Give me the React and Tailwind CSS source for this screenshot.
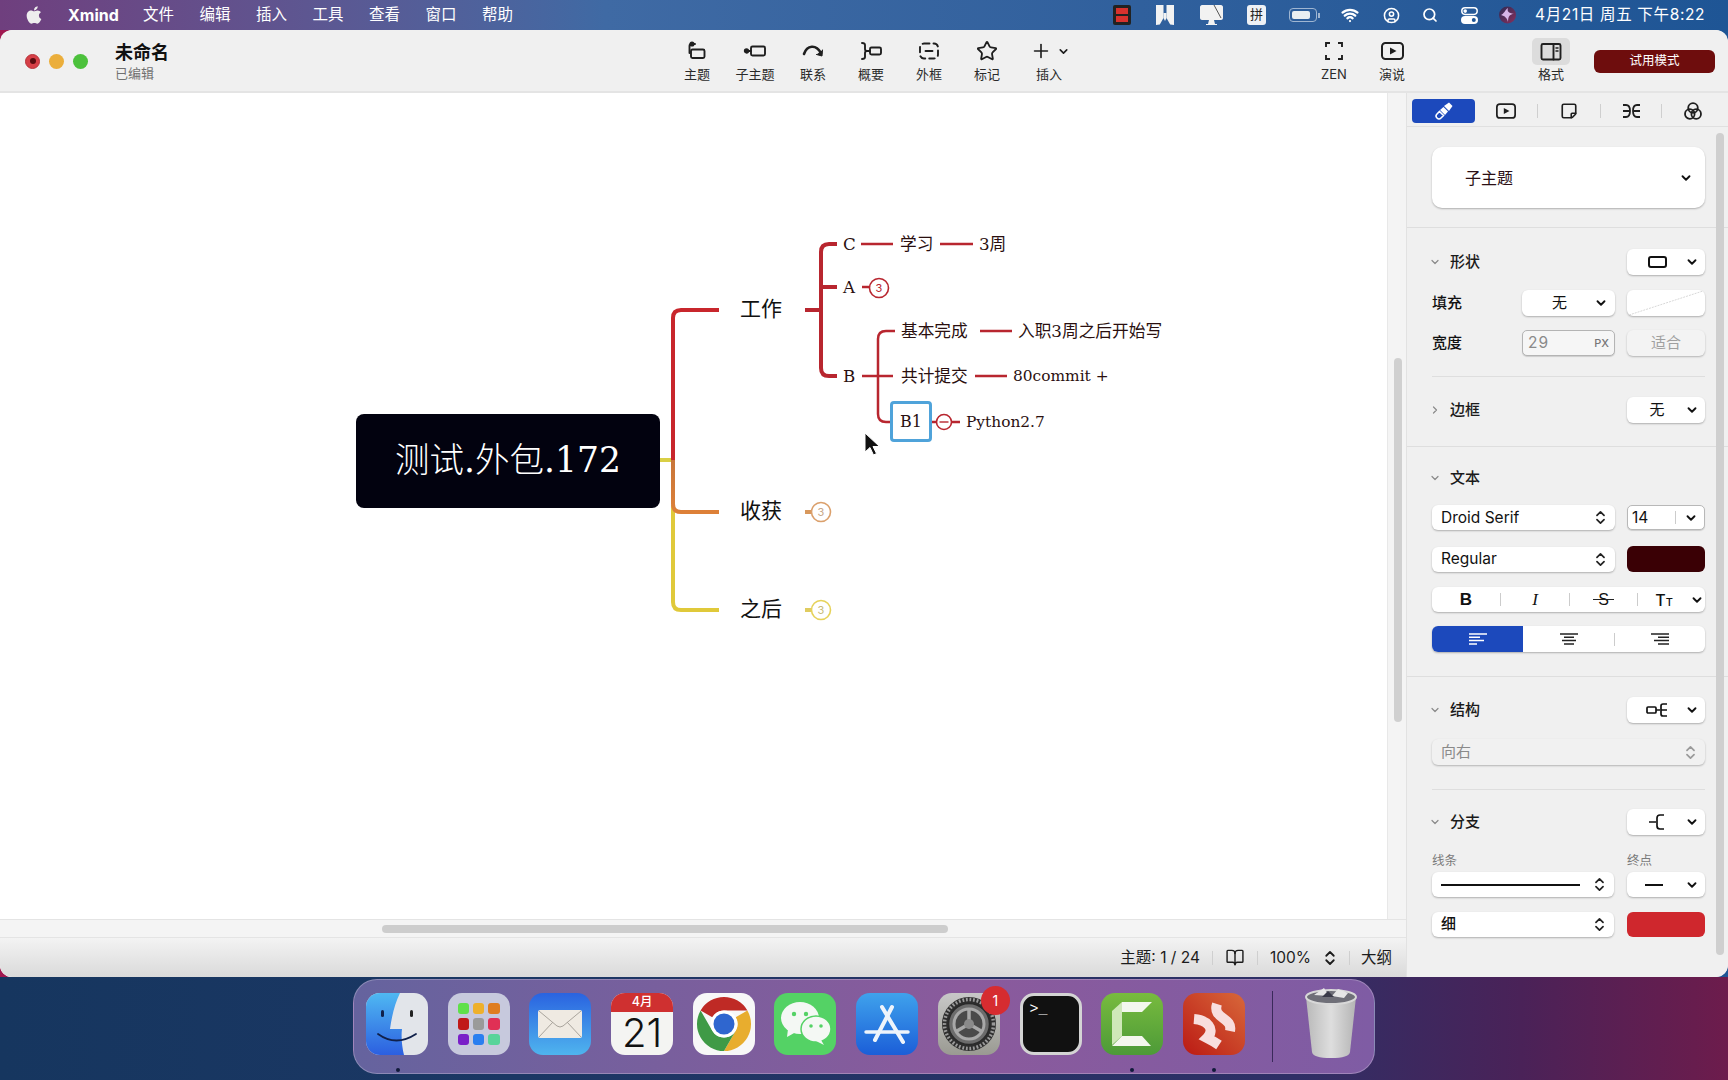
// Xmind window on a macOS desktop
import {
  ChevronDown,
  ChevronRight,
  ChevronsUpDown,
  Plus,
  Search,
  Star,
  StickyNote,
  Wifi,
  CircleUser,
  BookOpen,
} from 'lucide-react';
import { FaApple } from 'react-icons/fa';

const UI_FONT = "font-['Inter','Noto_Sans_CJK_SC',sans-serif]";
const MAP_FONT = "font-['DejaVu_Serif','Noto_Sans_CJK_SC',serif]";

const menus = ['文件', '编辑', '插入', '工具', '查看', '窗口', '帮助'];

/* ---------- menu bar ---------- */

function MenuBar() {
  return (
    <div className="h-[30px] flex items-center text-white bg-gradient-to-r from-[#6f3f7e] via-[#3f6aa4] via-35% to-[#1e5595] text-[15.5px]">
      <FaApple className="ml-[25px] w-[18px] h-[20px] text-[#eeeeee]" />
      <span className="ml-[25px] w-[50px] font-bold text-[16px]">Xmind</span>
      <div className="ml-[25px] flex gap-[24.5px]">
        {menus.map((m) => (
          <span key={m} className="w-[32px] whitespace-nowrap">{m}</span>
        ))}
      </div>
      <div className="flex-1" />
      <div className="w-[18px] h-[20px] bg-[#222] rounded-[2px] flex flex-col gap-[2px] p-[3px]">
        <div className="flex-1 bg-[#d8322e]" />
        <div className="flex-1 bg-[#d8322e]" />
      </div>
      <svg className="ml-[25px] w-[18px] h-[20px]" viewBox="0 0 18 20" fill="#f2f2f2">
        <path d="M0 0h7.500v13L3.800 19.500 0 20zM10.500 0H18v20l-3.800-.5L10.500 13z" />
        <path d="M7.500 8h3v5l-1.500 3-1.500-3z" />
      </svg>
      <svg className="ml-[26px] w-[23px] h-[22px]" viewBox="0 0 23 22" fill="#f2f2f2">
        <path d="M2 1h19c1 0 2 1 2 2v11c0 1-1 2-2 2H2c-1 0-2-1-2-2V3c0-1 1-2 2-2z" />
        <path d="M9 16h5l1 4h2v1H6v-1h2z" />
        <path d="M14 1l7 13" stroke="#555" strokeWidth="1" fill="none" />
      </svg>
      <div className={`ml-[24px] w-[19px] h-[20px] rounded-[3px] bg-[#eef1f5] text-[#222] text-[13px] flex items-center justify-center ${UI_FONT}`}>拼</div>
      <div className="ml-[23px] w-[28px] h-[14px] rounded-[4px] border border-[#9fb6d2] p-[2px]">
        <div className="w-[18px] h-full rounded-[2px] bg-[#e8eef2]" />
      </div>
      <div className="ml-[1px] w-[2px] h-[5px] bg-[#9fb6d2]" />
      <Wifi className="ml-[20px] w-[20px] h-[18px]" strokeWidth={3} />
      <CircleUser className="ml-[23px] w-[17px] h-[17px]" strokeWidth={2.2} />
      <Search className="ml-[22px] w-[16px] h-[16px]" strokeWidth={2.6} />
      <svg className="ml-[23px] w-[17px] h-[17px]" viewBox="0 0 17 17">
        <rect x="0.8" y="0.8" width="15.4" height="6.6" rx="3.3" fill="none" stroke="#fff" strokeWidth="1.5" />
        <circle cx="4.2" cy="4.1" r="1.8" fill="#fff" />
        <rect x="0" y="9" width="17" height="8" rx="4" fill="#fff" />
        <circle cx="12.8" cy="13" r="2" fill="#1e5595" />
      </svg>
      <svg className="ml-[21px] w-[17px] h-[18px]" viewBox="0 0 17 18">
        <defs>
          <linearGradient id="siri" x1="0" y1="0" x2="1" y2="1">
            <stop offset="0" stopColor="#2b2b55" />
            <stop offset="1" stopColor="#8a2f5c" />
          </linearGradient>
        </defs>
        <circle cx="8.500" cy="9" r="8.500" fill="url(#siri)" />
        <path d="M2 9c3-1 4-5 7-7-1 3 0 5 6 6-4 0-6 2-6 8-1-4-3-6-7-7z" fill="#d8b4e8" />
      </svg>
      <span className={`ml-[19px] mr-[23px] w-[170px] whitespace-nowrap tracking-[0.65px] text-[15.5px] ${UI_FONT}`}>4月21日 周五 下午8:22</span>
    </div>
  );
}

/* ---------- toolbar ---------- */

function IconBox({ children }) {
  return (
    <svg className="w-[24px] h-[24px]" viewBox="0 0 24 24" fill="none" stroke="#1f1f1f" strokeWidth="1.9" strokeLinecap="round" strokeLinejoin="round">
      {children}
    </svg>
  );
}

const TopicIcon = () => (
  <IconBox>
    <circle cx="7" cy="5" r="1.6" fill="#1f1f1f" />
    <path d="M10 5H6.500Q4.500 5 4.500 7v7" />
    <rect x="6" y="10.5" width="13.5" height="8.5" rx="1.5" />
  </IconBox>
);
const SubtopicIcon = () => (
  <IconBox>
    <circle cx="3.500" cy="12" r="1.7" fill="#1f1f1f" />
    <path d="M4 12h4" />
    <rect x="8" y="7.500" width="14" height="9" rx="1.5" />
  </IconBox>
);
const RelationIcon = () => (
  <IconBox>
    <path d="M3 15C6 6 15 5 20 14" strokeWidth="2.6" />
    <path d="M15.500 15.500l5.500 1.500 .5-6" fill="#1f1f1f" strokeWidth="1" />
  </IconBox>
);
const SummaryIcon = () => (
  <IconBox>
    <path d="M3 4Q6 4 6 6v4q0 2 2 2-2 0-2 2v4q0 2-3 2" />
    <path d="M8 12h3" />
    <rect x="11" y="8.500" width="11" height="7" rx="1.5" />
  </IconBox>
);
const BoundaryIcon = () => (
  <IconBox>
    <rect x="3" y="4.500" width="18" height="15" rx="4" strokeDasharray="5.500 4" />
    <path d="M8.500 12h7" />
  </IconBox>
);
const ZenIcon = () => (
  <IconBox>
    <path d="M8 4H4v4M16 4h4v4M4 16v4h4M20 16v4h-4" strokeLinecap="butt" strokeLinejoin="miter" />
  </IconBox>
);
const PlayIcon = ({ small }) => (
  <svg className={small ? 'w-[20px] h-[16px]' : 'w-[23px] h-[18px]'} viewBox="0 0 23 18" fill="none" stroke="#1f1f1f" strokeWidth="2">
    <rect x="1" y="1" width="21" height="16" rx="3.500" />
    <path d="M9 5.500l6.500 3.500L9 12.500z" fill="#1f1f1f" stroke="none" />
  </svg>
);
const FormatIcon = () => (
  <IconBox>
    <rect x="2.500" y="4" width="19" height="15.500" rx="1.500" />
    <path d="M14.500 4v15.500" />
    <path d="M17 8h2M17 11h2" strokeWidth="1.500" />
  </IconBox>
);

function Tool({ label, children, className = '' }) {
  return (
    <div className={`w-[58px] shrink-0 h-full flex flex-col items-center ${className}`}>
      <div className="h-[24px] mt-[9px] flex items-center justify-center">{children}</div>
      <span className="mt-[2px] text-[13px] leading-[18px] text-[#2a2a2a] whitespace-nowrap">{label}</span>
    </div>
  );
}

function Toolbar() {
  return (
    <div className="h-[63px] shrink-0 flex items-stretch bg-[#f0f0f0] border-b-2 border-[#e4e4e4] rounded-t-[12px]">
      <div className="ml-[25px] flex items-center gap-[9px] h-[62px]">
        <div className="w-[15px] h-[15px] rounded-full bg-[#d63f47] border border-[#b8333a] flex items-center justify-center">
          <div className="w-[6px] h-[6px] rounded-full bg-[#5a0c10]" />
        </div>
        <div className="w-[15px] h-[15px] rounded-full bg-[#ebae3b]" />
        <div className="w-[15px] h-[15px] rounded-full bg-[#4cc13c]" />
      </div>
      <div className="ml-[27px] w-[80px] flex flex-col">
        <span className="mt-[11px] text-[18px] leading-[24px] font-bold text-[#111]">未命名</span>
        <span className="mt-[-1px] text-[13px] leading-[18px] text-[#707070]">已编辑</span>
      </div>
      <div className="ml-[473px] flex">
        <Tool label="主题"><TopicIcon /></Tool>
        <Tool label="子主题"><SubtopicIcon /></Tool>
        <Tool label="联系"><RelationIcon /></Tool>
        <Tool label="概要"><SummaryIcon /></Tool>
        <Tool label="外框"><BoundaryIcon /></Tool>
        <Tool label="标记"><Star className="w-[22px] h-[22px] text-[#1f1f1f]" strokeWidth={2} /></Tool>
        <Tool label="插入" className="ml-[4px]">
          <Plus className="w-[22px] h-[22px] ml-[2px] text-[#1f1f1f]" strokeWidth={1.8} />
          <ChevronDown className="w-[13px] h-[13px] ml-[5px] text-[#1f1f1f]" strokeWidth={3} />
        </Tool>
      </div>
      <div className="ml-[227px] flex">
        <Tool label="ZEN"><ZenIcon /></Tool>
        <Tool label="演说"><PlayIcon /></Tool>
      </div>
      <div className="ml-[101px] w-[58px] flex flex-col items-center">
        <div className="mt-[8px] w-[38px] h-[27px] rounded-[5px] bg-[#dcdcdc] flex items-center justify-center">
          <FormatIcon />
        </div>
        <span className="mt-[0px] text-[13px] leading-[18px] text-[#2a2a2a]">格式</span>
      </div>
      <div className="ml-[14px] mt-[20px] w-[121px] h-[23px] rounded-[6px] bg-[#6e0d0d] text-white text-[12.5px] flex items-center justify-center">试用模式</div>
    </div>
  );
}

/* ---------- mind map ---------- */

const Count = ({ x, y, color, text }) => (
  <g>
    <circle cx={x} cy={y} r="9.500" fill="#fff" stroke={color} strokeWidth="1.6" />
    <text x={x} y={y + 4} textAnchor="middle" fontSize="11" fontFamily="Inter, sans-serif" fill={text}>3</text>
  </g>
);

function MapLines() {
  // drawn in page coordinates, the canvas starts at y=93
  return (
    <svg className="absolute inset-0 w-[1388px] h-[827px]" viewBox="0 93 1388 827" fill="none">
      <defs>
        <linearGradient id="toOrange" x1="0" y1="460" x2="0" y2="512" gradientUnits="userSpaceOnUse">
          <stop offset="0" stopColor="#c8763a" />
          <stop offset="1" stopColor="#dd8038" />
        </linearGradient>
      </defs>
      <path d="M660 460H673" stroke="#d9cf45" strokeWidth="4" />
      <path d="M673 505V602Q673 610 681 610H719" stroke="#e0c93a" strokeWidth="4" />
      <path d="M673 460V504Q673 512 681 512H719" stroke="url(#toOrange)" strokeWidth="4" />
      <path d="M673 460V318Q673 310 681 310H719" stroke="#c8262c" strokeWidth="4" />

      <path d="M805 310H821" stroke="#b8262f" strokeWidth="4" />
      <path d="M837 244H829Q821 244 821 252V368Q821 376 829 376H837" stroke="#b8262f" strokeWidth="4" />
      <path d="M821 287H837" stroke="#b8262f" strokeWidth="4" />

      <g stroke="#b8262f" strokeWidth="2.500">
        <path d="M861 244H893M940 244H973" />
        <path d="M862 376H893" />
        <path d="M895 331H886Q878 331 878 339V414Q878 422 886 422H893" />
        <path d="M980 331H1012M975 376H1007" />
        <path d="M928 422H937M951 422H960" />
        <path d="M862 287H870" />
      </g>
      <Count x={879} y={288} color="#b8262f" text="#b8262f" />
      <circle cx="944" cy="422" r="7.500" fill="#fff" stroke="#b8262f" strokeWidth="1.6" />
      <path d="M939.500 422H948.500" stroke="#b8262f" strokeWidth="1.4" />

      <path d="M805 512H813" stroke="#d8985c" strokeWidth="4" />
      <Count x={821} y={512} color="#dba06c" text="#c8a888" />
      <path d="M805 610H813" stroke="#e0cc60" strokeWidth="4" />
      <Count x={821} y={610} color="#e6d25a" text="#c8bc78" />

      {/* mouse pointer */}
      <path d="M865 433V452L870 447.500L873.500 455L876.500 453.500L873 446.500H879.500Z" fill="#111" stroke="#fff" strokeWidth="1" />
    </svg>
  );
}

function MapCanvas() {
  const big = 'absolute -translate-y-1/2 text-[21px] text-[#111] whitespace-nowrap';
  const node = `absolute -translate-y-1/2 text-[#2a0f0f] whitespace-nowrap ${MAP_FONT}`;
  const small = `${node} text-[16.7px]`;
  const latin = `${node} text-[15.4px]`;
  return (
    <div className={`relative w-[1388px] h-full bg-white border-r border-[#e8e8e8] overflow-hidden ${MAP_FONT}`}>
      <MapLines />
      <div className="absolute left-[356px] top-[321px] w-[304px] h-[94px] rounded-[8px] bg-[#02020f] text-white text-[34.5px] font-light flex items-center justify-center whitespace-nowrap">
        测试.外包.172
      </div>
      <span className={`${big} left-[740px] top-[217px]`}>工作</span>
      <span className={`${big} left-[740px] top-[419px]`}>收获</span>
      <span className={`${big} left-[740px] top-[517px]`}>之后</span>

      <span className={`${small} left-[843px] top-[152px]`}>C</span>
      <span className={`${small} left-[900px] top-[152px]`}>学习</span>
      <span className={`${small} left-[979px] top-[152px]`}>3周</span>
      <span className={`${small} left-[843px] top-[195px]`}>A</span>
      <span className={`${small} left-[843px] top-[284px]`}>B</span>
      <span className={`${small} left-[901px] top-[239px]`}>基本完成</span>
      <span className={`${small} left-[1018px] top-[239px]`}>入职3周之后开始写</span>
      <span className={`${small} left-[901px] top-[284px]`}>共计提交</span>
      <span className={`${latin} left-[1013px] top-[284px]`}>80commit +</span>
      <div className="absolute left-[890px] top-[308px] w-[42px] h-[41px] rounded-[4px] border-[3px] border-[#4fa3da] bg-white text-[16px] text-[#2a0f0f] flex items-center justify-center">
        B1
      </div>
      <span className={`${latin} left-[966px] top-[329.500px]`}>Python2.7</span>
    </div>
  );
}

/* ---------- left column ---------- */

function StatusBar() {
  const sep = 'w-px h-[14px] bg-[#cfcfcf]';
  return (
    <div className="h-[39px] shrink-0 flex items-center justify-end pr-[14px] text-[15.5px] text-[#1c1c1c] bg-gradient-to-b from-[#f3f3f3] to-[#dadada] rounded-bl-[12px]">
      <span className="whitespace-nowrap">主题: 1 / 24</span>
      <div className={`${sep} ml-[12px]`} />
      <BookOpen className="ml-[12px] w-[20px] h-[19px]" strokeWidth={1.8} />
      <div className={`${sep} ml-[12px]`} />
      <span className="ml-[12px] w-[44px]">100%</span>
      <ChevronsUpDown className="ml-[7px] w-[18px] h-[22px]" strokeWidth={2.4} />
      <div className={`${sep} ml-[10px]`} />
      <span className="ml-[11px] whitespace-nowrap">大纲</span>
    </div>
  );
}

function LeftColumn() {
  return (
    <div className="w-[1406px] h-full shrink-0 flex flex-col bg-[#f4f4f4]">
      <div className="flex-1 min-h-0 flex border-b border-[#e4e4e4]">
        <MapCanvas />
        <div className="flex-1 pt-[265px] flex justify-center pl-[1px]">
          <div className="w-[8px] h-[364px] rounded-full bg-[#d0d0d0]" />
        </div>
      </div>
      <div className="h-[18px] shrink-0 border-b border-[#e4e4e4] pl-[382px] pt-[5px]">
        <div className="w-[566px] h-[8px] rounded-full bg-[#cdcdcd]" />
      </div>
      <StatusBar />
    </div>
  );
}

/* ---------- format panel ---------- */

const btn = 'bg-white rounded-[6px] shadow-[0_1px_2px_rgba(0,0,0,0.28)] flex items-center';

const Chev = ({ className = '' }) => <ChevronDown className={`w-[14px] h-[14px] text-[#111] ${className}`} strokeWidth={3.2} />;
const Stepper = ({ className = '', muted }) => (
  <ChevronsUpDown className={`w-[17px] h-[21px] ${muted ? 'text-[#9a9a9a]' : 'text-[#222]'} ${className}`} strokeWidth={2.4} />
);

function SectionTitle({ title, open = true }) {
  return (
    <div className="flex items-center w-[150px]">
      {open ? (
        <ChevronDown className="w-[12px] h-[12px] ml-[-3px] text-[#8a8a8a]" strokeWidth={2.4} />
      ) : (
        <ChevronRight className="w-[12px] h-[12px] ml-[-3px] text-[#8a8a8a]" strokeWidth={2.4} />
      )}
      <span className="ml-[9px] text-[15px] font-medium text-[#1a1a1a] whitespace-nowrap">{title}</span>
    </div>
  );
}

function SmallSelect({ children }) {
  return (
    <div className={`${btn} w-[78px] h-[26px] relative justify-center pr-[18px]`}>
      {children}
      <Chev className="absolute right-[6px]" />
    </div>
  );
}

function Panel() {
  return (
    <div className={`relative flex-1 h-full bg-[#f0f0f0] border-l border-[#e2e2e2] flex flex-col rounded-br-[12px] overflow-hidden ${UI_FONT}`}>
      {/* tabs */}
      <div className="h-[34px] shrink-0 flex items-center pl-[5px] pt-[2px] border-b border-[#e0e0e0]">
        <div className="w-[63px] h-[24px] rounded-[4px] bg-[#1c49bc] flex items-center justify-center">
          <svg className="w-[18px] h-[18px]" viewBox="0 0 18 18" fill="#fff">
            <path d="M9 4L14 0.500L17.500 4L14 9Z" />
            <path d="M5 8L8.500 5L13 9.500L10 13Z" />
            <path d="M4.500 9.500L8.500 13.500L6 16Q4 18 2 16Q0 14 2 12Z" fill="none" stroke="#fff" strokeWidth="1.6" />
          </svg>
        </div>
        <div className="w-[62px] flex justify-center"><PlayIcon small /></div>
        <div className="w-px h-[14px] bg-[#cfcfcf]" />
        <div className="w-[62px] flex justify-center"><StickyNote className="w-[18px] h-[18px] text-[#1f1f1f] -scale-y-100" strokeWidth={2.2} /></div>
        <div className="w-px h-[14px] bg-[#cfcfcf]" />
        <div className="w-[60px] flex justify-center">
          <svg className="w-[19px] h-[14px]" viewBox="0 0 19 14" fill="none" stroke="#1f1f1f" strokeWidth="1.8">
            <path d="M1 1h3q4 0 4 6t-4 6H1M1 7h7M18 1h-3q-4 0-4 6t4 6h3M18 7h-7" />
          </svg>
        </div>
        <div className="w-px h-[14px] bg-[#cfcfcf]" />
        <div className="w-[62px] flex justify-center">
          <svg className="w-[18px] h-[18px]" viewBox="0 0 18 18" fill="none" stroke="#1f1f1f" strokeWidth="1.8">
            <circle cx="9" cy="6" r="4.800" />
            <circle cx="5.800" cy="12" r="4.800" />
            <circle cx="12.200" cy="12" r="4.800" />
          </svg>
        </div>
      </div>

      {/* style selector */}
      <div className="h-[101px] shrink-0 border-b border-[#dedede] pl-[25px] pt-[20px]">
        <div className={`${btn} w-[273px] h-[61px] rounded-[10px] relative pl-[33px] text-[16px] text-[#2a0f14]`}>
          子主题
          <Chev className="absolute right-[12px]" />
        </div>
      </div>

      {/* shape */}
      <div className="h-[219px] shrink-0 border-b border-[#dedede] pl-[25px] pt-[21px] text-[15px] text-[#111]">
        <div className="w-[273px] flex items-center justify-between h-[26px]">
          <SectionTitle title="形状" />
          <SmallSelect>
            <div className="w-[19px] h-[12px] rounded-[3px] border-2 border-[#111]" />
          </SmallSelect>
        </div>
        <div className="w-[273px] mt-[15px] flex items-center h-[26px]">
          <span className="w-[90px] font-medium">填充</span>
          <div className={`${btn} w-[93px] h-[26px] relative justify-center pr-[18px]`}>
            无
            <Chev className="absolute right-[7px]" />
          </div>
          <div className={`${btn} ml-[12px] w-[78px] h-[26px] overflow-hidden`}>
            <svg className="w-full h-full" viewBox="0 0 78 26">
              <path d="M2 25L76 1" stroke="#d8d8d8" strokeWidth="1" strokeDasharray="2 1" />
            </svg>
          </div>
        </div>
        <div className="w-[273px] mt-[14px] flex items-center h-[26px]">
          <span className="w-[90px] font-medium">宽度</span>
          <div className="w-[93px] h-[26px] rounded-[5px] bg-[#f6f6f6] border border-[#b4b4b4] shadow-[0_1px_1px_rgba(0,0,0,0.15)] flex items-center justify-between pl-[5px] pr-[5px] text-[#8a8a8a]">
            <span className="text-[15.5px] tracking-[1px]">29</span>
            <span className="text-[11px] font-medium text-[#777]">PX</span>
          </div>
          <div className="ml-[12px] w-[78px] h-[26px] rounded-[6px] bg-[#f3f3f3] shadow-[0_1px_2px_rgba(0,0,0,0.25)] text-[#a0a0a0] flex items-center justify-center">适合</div>
        </div>
        <div className="w-[273px] mt-[20px] border-t border-[#dedede]" />
        <div className="w-[273px] mt-[20px] flex items-center justify-between h-[26px]">
          <SectionTitle title="边框" open={false} />
          <SmallSelect>无</SmallSelect>
        </div>
      </div>

      {/* text */}
      <div className="h-[230px] shrink-0 border-b border-[#dedede] pl-[25px] pt-[18px] text-[#111]">
        <div className="h-[26px] flex items-center"><SectionTitle title="文本" /></div>
        <div className="w-[273px] mt-[14px] flex items-center">
          <div className={`${btn} w-[183px] h-[25px] justify-between pl-[9px] pr-[6px] text-[15.5px]`}>
            Droid Serif
            <Stepper />
          </div>
          <div className="ml-[12px] w-[78px] h-[25px] rounded-[5px] bg-white border border-[#b8b8b8] shadow-[0_1px_1px_rgba(0,0,0,0.15)] flex items-center pl-[4px] text-[15.5px]">
            <span className="w-[43px]">14</span>
            <div className="w-px h-[13px] bg-[#cccccc]" />
            <Chev className="ml-[8px]" />
          </div>
        </div>
        <div className="w-[273px] mt-[16px] flex items-center">
          <div className={`${btn} w-[183px] h-[25px] justify-between pl-[9px] pr-[6px] text-[15.5px]`}>
            Regular
            <Stepper />
          </div>
          <div className="ml-[12px] w-[78px] h-[26px] rounded-[6px] bg-[#3a0005]" />
        </div>
        <div className={`${btn} w-[273px] h-[25px] mt-[15px] text-[#111]`}>
          <div className="w-[68px] text-center font-bold text-[17px] font-['Liberation_Sans',sans-serif]">B</div>
          <div className="w-px h-[13px] bg-[#cccccc]" />
          <div className="w-[68px] text-center italic text-[17px] font-['Liberation_Serif',serif]">I</div>
          <div className="w-px h-[13px] bg-[#cccccc]" />
          <div className="w-[67px] flex justify-center">
            <span className="relative text-[16px] font-['Liberation_Sans',sans-serif]">
              S
              <span className="absolute left-[-5px] right-[-5px] top-[11px] h-[1.500px] bg-[#222]" />
            </span>
          </div>
          <div className="w-px h-[13px] bg-[#cccccc]" />
          <div className="w-[52px] text-center text-[16px] font-medium">T<span className="text-[11px]">T</span></div>
          <Chev />
        </div>
        <div className={`${btn} w-[273px] h-[26px] mt-[14px]`}>
          <div className="w-[91px] h-full rounded-l-[6px] bg-[#1c49bc] flex items-center justify-center">
            <svg className="w-[18px] h-[12px]" viewBox="0 0 18 12" stroke="#fff" strokeWidth="1.500">
              <path d="M0 1h18M0 4.300h11M0 7.600h15M0 11h8" />
            </svg>
          </div>
          <div className="w-[91px] flex justify-center">
            <svg className="w-[18px] h-[12px]" viewBox="0 0 18 12" stroke="#222" strokeWidth="1.500">
              <path d="M0 1h18M4 4.300h10M2 7.600h14M4 11h10" />
            </svg>
          </div>
          <div className="w-px h-[13px] bg-[#cccccc]" />
          <div className="w-[90px] flex justify-center">
            <svg className="w-[18px] h-[12px]" viewBox="0 0 18 12" stroke="#222" strokeWidth="1.500">
              <path d="M0 1h18M7 4.300h11M3 7.600h15M7 11h11" />
            </svg>
          </div>
        </div>
      </div>

      {/* structure */}
      <div className="shrink-0 pl-[25px] pt-[20px] text-[15px] text-[#111]">
        <div className="w-[273px] flex items-center justify-between h-[26px]">
          <SectionTitle title="结构" />
          <SmallSelect>
            <svg className="w-[22px] h-[14px]" viewBox="0 0 22 14" fill="none" stroke="#111" strokeWidth="1.7">
              <rect x="1" y="4" width="9" height="6" rx="1" />
              <path d="M10 7h4M21 1h-4q-2 0-2 2v8q0 2 2 2h4M15 7h6" />
            </svg>
          </SmallSelect>
        </div>
        <div className="w-[273px] h-[26px] mt-[16px] rounded-[6px] bg-[#f1f1f1] shadow-[0_1px_2px_rgba(0,0,0,0.25)] flex items-center justify-between pl-[9px] pr-[6px] text-[#8a8a8a]">
          向右
          <Stepper muted />
        </div>
        <div className="w-[273px] mt-[24px] border-t border-[#dedede]" />
      </div>

      {/* branch */}
      <div className="shrink-0 pl-[25px] pt-[19px] text-[15px] text-[#111]">
        <div className="w-[273px] flex items-center justify-between h-[26px]">
          <SectionTitle title="分支" />
          <SmallSelect>
            <svg className="w-[16px] h-[16px]" viewBox="0 0 16 16" fill="none" stroke="#111" strokeWidth="1.7">
              <path d="M0 8h7M15 1h-4q-3 0-3 3v8q0 3 3 3h4" />
            </svg>
          </SmallSelect>
        </div>
        <div className="w-[273px] mt-[17px] h-[17px] flex text-[12.5px] leading-[17px] text-[#7a7a7a]">
          <span className="w-[195px]">线条</span>
          <span>终点</span>
        </div>
        <div className="w-[273px] mt-[3px] flex items-center">
          <div className={`${btn} w-[182px] h-[25px] pl-[9px] pr-[6px] justify-between`}>
            <div className="w-[139px] h-[2px] bg-[#111]" />
            <Stepper />
          </div>
          <div className={`${btn} ml-[13px] w-[78px] h-[25px] relative`}>
            <div className="ml-[18px] w-[18px] h-[2px] bg-[#111]" />
            <Chev className="absolute right-[6px]" />
          </div>
        </div>
        <div className="w-[273px] mt-[15px] flex items-center">
          <div className={`${btn} w-[182px] h-[25px] pl-[9px] pr-[6px] justify-between font-medium`}>
            细
            <Stepper />
          </div>
          <div className="ml-[13px] w-[78px] h-[25px] rounded-[6px] bg-[#cf272d]" />
        </div>
      </div>

      {/* panel scrollbar lies over the content */}
      <div className="absolute left-[309px] top-[40px] w-[8px] h-[822px] rounded-full bg-[#cfcfcf]" />
    </div>
  );
}

/* ---------- dock ---------- */

const squircle = 'w-[62px] h-[62px] rounded-[14px] shrink-0';

function Finder() {
  return (
    <svg className="w-[62px] h-[62px] shrink-0" viewBox="0 0 62 62">
      <defs>
        <linearGradient id="finderBlue" x1="0" y1="0" x2="0" y2="1">
          <stop offset="0" stopColor="#4fb8f2" />
          <stop offset="1" stopColor="#2c5fe0" />
        </linearGradient>
        <clipPath id="finderClip"><rect width="62" height="62" rx="14" /></clipPath>
      </defs>
      <g clipPath="url(#finderClip)">
        <rect width="62" height="62" fill="#e2e5ea" />
        <path d="M0 0H34C29 10 26 22 24 36H36C35 44 36 54 38 62H0Z" fill="url(#finderBlue)" />
      </g>
      <rect x="15" y="17" width="3" height="7" rx="1.500" fill="#10204a" />
      <rect x="44" y="17" width="3" height="7" rx="1.500" fill="#222" />
      <path d="M12 41Q30 54 50 41" fill="none" stroke="#10204a" strokeWidth="1.8" strokeLinecap="round" />
    </svg>
  );
}

function Launchpad() {
  const tiles = ['#5fe04a', '#eeb02c', '#df7d20', '#c01818', '#9a9a9a', '#e03055', '#7a1fc8', '#2a7ef0', '#58d49a'];
  return (
    <div className={`${squircle} bg-[#c7c9dd] grid grid-cols-3 gap-[4px] p-[10px]`}>
      {tiles.map((c) => (
        <div key={c} className="rounded-[3px]" style={{ backgroundColor: c }} />
      ))}
    </div>
  );
}

function Mail() {
  return (
    <svg className="w-[62px] h-[62px] shrink-0" viewBox="0 0 62 62">
      <defs>
        <linearGradient id="mailBg" x1="0" y1="0" x2="0" y2="1">
          <stop offset="0" stopColor="#2a63e0" />
          <stop offset="1" stopColor="#4fb4ee" />
        </linearGradient>
      </defs>
      <rect width="62" height="62" rx="14" fill="url(#mailBg)" />
      <rect x="9" y="17" width="44" height="28" rx="2" fill="#efeae2" />
      <path d="M10 18L28 33Q31 35 34 33L52 18M10 44L24 29M52 44L38 29" fill="none" stroke="#a9a49c" strokeWidth="1" />
    </svg>
  );
}

function CalendarIcon() {
  return (
    <div className={`${squircle} bg-[#f4f4f2] flex flex-col items-center`}>
      <div className="w-full h-[19px] shrink-0 rounded-t-[14px] bg-[#cf3030] text-white text-[12.5px] font-medium flex items-center justify-center">4月</div>
      <div className="text-[40px] leading-[42px] text-[#111] font-light font-['Inter',sans-serif]">21</div>
    </div>
  );
}

function Chrome() {
  return (
    <svg className="w-[62px] h-[62px] shrink-0" viewBox="0 0 62 62">
      <rect width="62" height="62" rx="14" fill="#f7f7f7" />
      <path d="M31 4A27 27 0 0 1 54.400 17.500H31A13.500 13.500 0 0 0 19.300 24.250L7.600 17.500A27 27 0 0 1 31 4Z" fill="#bf2a25" />
      <path d="M54.400 17.500A27 27 0 0 1 31 58L42.700 37.750A13.500 13.500 0 0 0 42.700 24.250Z" fill="#e8ad2e" />
      <path d="M7.600 17.500A27 27 0 0 0 31 58L42.700 37.750A13.500 13.500 0 0 1 19.300 37.750Z" fill="#3f9a46" />
      <circle cx="31" cy="31" r="13.500" fill="#fff" />
      <circle cx="31" cy="31" r="10.500" fill="#2f66cf" />
    </svg>
  );
}

function WeChat() {
  return (
    <svg className="w-[62px] h-[62px] shrink-0" viewBox="0 0 62 62">
      <rect width="62" height="62" rx="14" fill="#54d265" />
      <ellipse cx="26" cy="25" rx="19" ry="16" fill="#f4f8f4" />
      <path d="M14 36L13 44L22 39Z" fill="#f4f8f4" />
      <ellipse cx="42" cy="36" rx="15" ry="13" fill="#f4f8f4" stroke="#54d265" strokeWidth="1.5" />
      <path d="M47 47L50 52L42 48Z" fill="#f4f8f4" />
      <circle cx="20" cy="21" r="2.200" fill="#54d265" />
      <circle cx="32" cy="21" r="2.200" fill="#54d265" />
      <circle cx="37" cy="33" r="1.800" fill="#54d265" />
      <circle cx="47" cy="33" r="1.800" fill="#54d265" />
    </svg>
  );
}

function AppStore() {
  return (
    <svg className="w-[62px] h-[62px] shrink-0" viewBox="0 0 62 62">
      <defs>
        <linearGradient id="storeBg" x1="0" y1="0" x2="0" y2="1">
          <stop offset="0" stopColor="#3fa2ec" />
          <stop offset="1" stopColor="#1b5ed8" />
        </linearGradient>
      </defs>
      <rect width="62" height="62" rx="14" fill="url(#storeBg)" />
      <g stroke="#eef4fb" strokeWidth="4" strokeLinecap="round" fill="none">
        <path d="M26 14L47 49" />
        <path d="M36 14L19 47" />
        <path d="M10 39H52" strokeWidth="3.500" />
      </g>
    </svg>
  );
}

function Settings() {
  return (
    <div className="relative w-[62px] h-[62px] shrink-0">
      <svg className="w-[62px] h-[62px]" viewBox="0 0 62 62">
        <defs>
          <linearGradient id="gearBg" x1="0" y1="0" x2="0" y2="1">
            <stop offset="0" stopColor="#c8c8c8" />
            <stop offset="1" stopColor="#9a9a92" />
          </linearGradient>
        </defs>
        <rect width="62" height="62" rx="14" fill="url(#gearBg)" />
        <circle cx="31" cy="31" r="27" fill="#2e2e2e" />
        <circle cx="31" cy="31" r="24.500" fill="none" stroke="#9a9a9a" strokeWidth="3.500" strokeDasharray="1.800 1.800" />
        <circle cx="31" cy="31" r="20.500" fill="#6c6c6c" stroke="#2a2a2a" strokeWidth="1.500" />
        <circle cx="31" cy="31" r="15" fill="#4a4a4a" stroke="#a8a8a8" strokeWidth="3" />
        <g stroke="#a8a8a8" strokeWidth="3.500">
          <path d="M31 31V16M31 31L44 38.500M31 31L18 38.500" />
        </g>
        <circle cx="31" cy="31" r="5" fill="#8a8a8a" />
      </svg>
      <div className="absolute right-[-10px] top-[-7px] w-[29px] h-[29px] rounded-full bg-[#d62c30] text-white text-[14px] font-['Inter',sans-serif] flex items-center justify-center">1</div>
    </div>
  );
}

function Terminal() {
  return (
    <div className={`${squircle} bg-[#111] border-[3px] border-[#d4d4d4] rounded-[13px] pl-[7px] pt-[5px] text-white text-[15px] leading-[18px] font-['Liberation_Mono',monospace]`}>
      &gt;_
    </div>
  );
}

function Camtasia() {
  return (
    <svg className="w-[62px] h-[62px] shrink-0" viewBox="0 0 62 62">
      <defs>
        <linearGradient id="camBg" x1="0" y1="0" x2="0" y2="1">
          <stop offset="0" stopColor="#78bb3e" />
          <stop offset="1" stopColor="#4d9a38" />
        </linearGradient>
      </defs>
      <rect width="62" height="62" rx="14" fill="url(#camBg)" />
      <path d="M21 9H51L41 19H21Z" fill="#f4f7ee" />
      <path d="M11 18L21 9V43L11 52Z" fill="#cfe8b8" />
      <path d="M21 43H41L50 53H11Z" fill="#f4f7ee" />
    </svg>
  );
}

function XmindIcon() {
  return (
    <svg className="w-[62px] h-[62px] shrink-0" viewBox="0 0 62 62">
      <defs>
        <linearGradient id="xmBg" x1="0" y1="1" x2="1" y2="0">
          <stop offset="0" stopColor="#bb1a14" />
          <stop offset="1" stopColor="#d8683a" />
        </linearGradient>
      </defs>
      <rect width="62" height="62" rx="14" fill="url(#xmBg)" />
      <g fill="none" stroke="#f8dede" strokeWidth="10">
        <path d="M34 11C29 26 50 24 47 38" />
        <path d="M11 26C24 27 33 36 24 45Q30 48 36 52" />
      </g>
    </svg>
  );
}

function Trash() {
  return (
    <svg className="w-[54px] h-[71px] shrink-0" viewBox="0 0 54 71">
      <defs>
        <linearGradient id="binBg" x1="0" y1="0" x2="1" y2="0">
          <stop offset="0" stopColor="#b9b9b9" />
          <stop offset="0.5" stopColor="#dedede" />
          <stop offset="1" stopColor="#b4b4b4" />
        </linearGradient>
      </defs>
      <path d="M2 10L8 65Q9 71 27 71Q45 71 46 65L52 10Z" fill="url(#binBg)" />
      <ellipse cx="27" cy="10" rx="25" ry="7" fill="#6f6f78" stroke="#d8d8d8" strokeWidth="2" />
      <path d="M10 8L20 1L25 9ZM28 9L34 2L44 6L40 11Z" fill="#e6e6e6" />
      <path d="M18 10L24 4L30 10Z" fill="#3a3a48" />
    </svg>
  );
}

function Dock() {
  const dot = 'absolute top-[88px] w-[4px] h-[4px] rounded-full bg-[#111a3a]';
  return (
    <div className={`relative mt-[2px] ml-[353px] w-[1022px] h-[95px] rounded-[24px] border border-white/25 bg-gradient-to-r from-[#65639e] via-[#8a5a9c] via-60% to-[#7f5ca4] flex items-start pt-[13px] pl-[12px] gap-[19.7px] ${UI_FONT}`}>
      <Finder />
      <Launchpad />
      <Mail />
      <CalendarIcon />
      <Chrome />
      <WeChat />
      <AppStore />
      <Settings />
      <Terminal />
      <Camtasia />
      <XmindIcon />
      <div className="ml-[7px] mt-[-2px] w-px h-[71px] bg-[#3a2a5a]" />
      <div className="ml-[12px] mt-[-6px]"><Trash /></div>
      {/* running app dots */}
      <div className={`${dot} left-[42px]`} />
      <div className={`${dot} left-[776px]`} />
      <div className={`${dot} left-[858px]`} />
    </div>
  );
}

export default function App() {
  return (
    <div className={`w-[1728px] h-[1080px] overflow-hidden bg-[linear-gradient(180deg,rgba(20,10,40,0.7),rgba(0,0,0,0)_50%),linear-gradient(90deg,#16365f_0%,#1b3764_30%,#2f2f66_75%,#4a2258_88%,#6d1c4c_100%)] ${UI_FONT}`}>
      <MenuBar />
      <div className="h-[947px] bg-gradient-to-r from-[#a01850] via-[#1a1030] to-[#1e5595]">
        <div className="w-full h-full rounded-[12px] overflow-hidden flex flex-col bg-[#f0f0f0]">
          <Toolbar />
          <div className="flex-1 min-h-0 flex">
            <LeftColumn />
            <Panel />
          </div>
        </div>
      </div>
      <Dock />
    </div>
  );
}
